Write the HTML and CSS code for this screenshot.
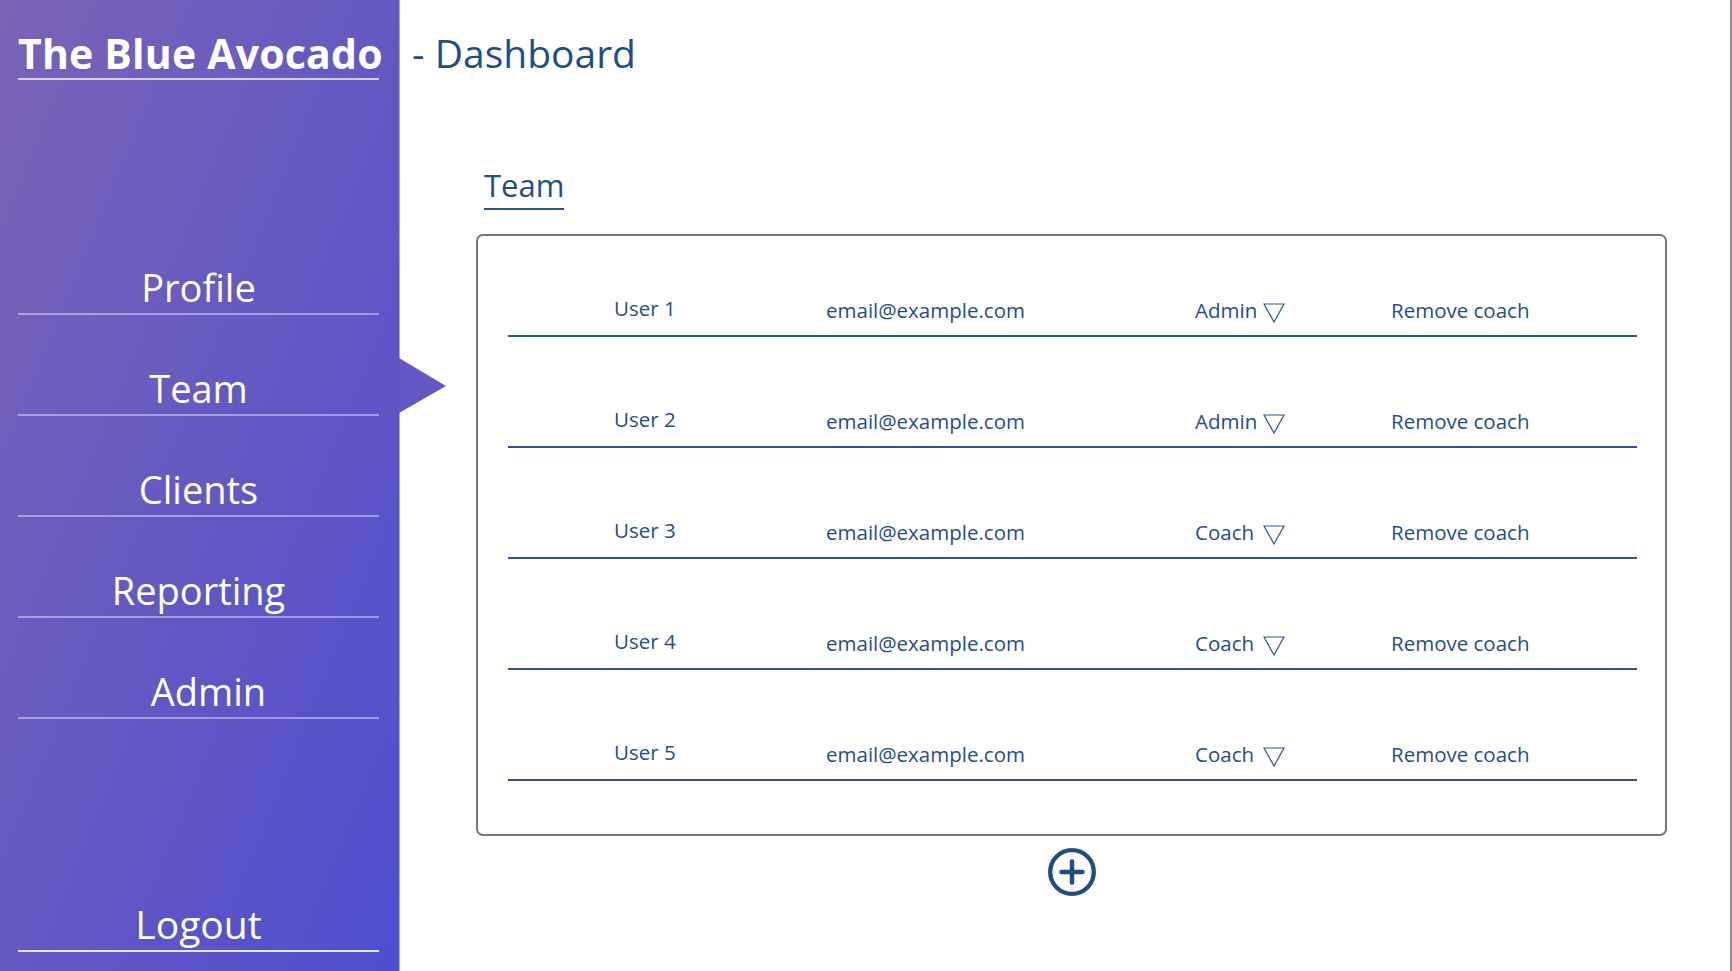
FILE: index.html
```html
<!DOCTYPE html>
<html lang="en">
<head>
<meta charset="utf-8">
<title>The Blue Avocado - Dashboard</title>
<link rel="stylesheet" href="styles.css">
</head>
<body>
<div class="app">
  <aside class="sidebar">
    <h1 class="brand">The Blue Avocado</h1>
    <nav class="nav">
      <a class="nav-item">Profile</a>
      <a class="nav-item active">Team</a>
      <a class="nav-item">Clients</a>
      <a class="nav-item">Reporting</a>
      <a class="nav-item admin">Admin</a>
    </nav>
    <a class="nav-item logout">Logout</a>
  </aside>
  <main class="main">
    <div class="page-title">- Dashboard</div>
    <h2 class="section-title">Team</h2>
    <div class="team-box">
      <div class="row">
        <span class="cell user">User 1</span>
        <span class="cell email">email@example.com</span>
        <span class="cell role"><span class="role-name">Admin</span><svg class="caret" viewBox="0 0 22 20" width="22" height="20"><polygon points="1,1 21,1 11,19" fill="none" stroke="#2a5694" stroke-width="1.2" stroke-linejoin="miter"/></svg></span>
        <span class="cell remove">Remove coach</span>
      </div>
      <div class="row">
        <span class="cell user">User 2</span>
        <span class="cell email">email@example.com</span>
        <span class="cell role"><span class="role-name">Admin</span><svg class="caret" viewBox="0 0 22 20" width="22" height="20"><polygon points="1,1 21,1 11,19" fill="none" stroke="#2a5694" stroke-width="1.2" stroke-linejoin="miter"/></svg></span>
        <span class="cell remove">Remove coach</span>
      </div>
      <div class="row">
        <span class="cell user">User 3</span>
        <span class="cell email">email@example.com</span>
        <span class="cell role"><span class="role-name">Coach</span><svg class="caret" viewBox="0 0 22 20" width="22" height="20"><polygon points="1,1 21,1 11,19" fill="none" stroke="#2a5694" stroke-width="1.2" stroke-linejoin="miter"/></svg></span>
        <span class="cell remove">Remove coach</span>
      </div>
      <div class="row">
        <span class="cell user">User 4</span>
        <span class="cell email">email@example.com</span>
        <span class="cell role"><span class="role-name">Coach</span><svg class="caret" viewBox="0 0 22 20" width="22" height="20"><polygon points="1,1 21,1 11,19" fill="none" stroke="#2a5694" stroke-width="1.2" stroke-linejoin="miter"/></svg></span>
        <span class="cell remove">Remove coach</span>
      </div>
      <div class="row">
        <span class="cell user">User 5</span>
        <span class="cell email">email@example.com</span>
        <span class="cell role"><span class="role-name">Coach</span><svg class="caret" viewBox="0 0 22 20" width="22" height="20"><polygon points="1,1 21,1 11,19" fill="none" stroke="#2a5694" stroke-width="1.2" stroke-linejoin="miter"/></svg></span>
        <span class="cell remove">Remove coach</span>
      </div>
    </div>
    <div class="add-wrap">
      <svg class="add-btn" viewBox="0 0 48 48" width="48" height="48">
        <circle cx="24" cy="24" r="21.8" fill="none" stroke="#1f4b86" stroke-width="4.3"/>
        <path d="M24 13.5 V34.5 M13.5 24 H34.5" stroke="#1f4b86" stroke-width="4.5" stroke-linecap="round" fill="none"/>
      </svg>
    </div>
  </main>
</div>
</body>
</html>
```
FILE: styles.css
```css
* { box-sizing: border-box; }

html, body {
  margin: 0;
  padding: 0;
  height: 100%;
  background: #ffffff;
}

body {
  font-family: "Open Sans", "Noto Sans", "Liberation Sans", sans-serif;
  overflow: hidden;
}

.app {
  display: flex;
  width: 1732px;
  height: 971px;
}

/* Sidebar */
.sidebar {
  position: relative;
  width: 400px;
  flex: 0 0 400px;
  height: 100%;
  display: flex;
  flex-direction: column;
  padding: 0 20px 19px 18px;
  background: linear-gradient(to bottom right, #7b63b6 0%, #6459c2 50%, #4e4ed0 100%);
  border-right: 1px solid #a9a6e6;
  color: #ffffff;
}

.brand {
  margin: 0;
  padding: 33px 0 5px 0;
  font-size: 41px;
  line-height: 40px;
  font-weight: 700;
  text-align: center;
  white-space: nowrap;
  letter-spacing: 0.2px;
  border-bottom: 2px solid rgba(255, 255, 255, 0.7);
}

.nav {
  display: flex;
  flex-direction: column;
  margin-top: 134px;
}

.nav-item {
  display: flex;
  align-items: flex-end;
  justify-content: center;
  height: 101px;
  padding-bottom: 7px;
  font-size: 38px;
  line-height: 38px;
  color: #ffffff;
  border-bottom: 2px solid rgba(255, 255, 255, 0.42);
  cursor: pointer;
}

.nav-item.admin { padding-left: 20px; }

.nav-item.active::after {
  content: "";
  position: absolute;
  left: 399px;
  top: 358px;
  width: 0;
  height: 0;
  border-top: 28px solid transparent;
  border-bottom: 27px solid transparent;
  border-left: 47px solid #6158c4;
}

.nav-item.logout {
  margin-top: auto;
  font-size: 39px;
  border-bottom-color: rgba(255, 255, 255, 0.85);
}

/* Main */
.main {
  flex: 1 1 auto;
  height: 100%;
  border-right: 2px solid #8c8c8c;
  padding: 33px 0 0 12px;
  color: #1f4e8c;
}

.page-title {
  font-size: 39px;
  line-height: 39px;
  color: #1f4e8c;
}

.section-title {
  display: inline-block;
  margin: 98px 0 0 72px;
  padding-bottom: 7px;
  font-size: 31px;
  line-height: 31px;
  font-weight: 400;
  color: #1f4e8c;
  border-bottom: 2px solid #2a5694;
}

.team-box {
  margin: 24px 0 0 64px;
  width: 1191px;
  height: 602px;
  border: 2px solid #777777;
  border-radius: 7px;
  padding: 39px 28px 0 30px;
  display: flex;
  flex-direction: column;
  gap: 49px;
}

.row {
  display: grid;
  grid-template-columns: 212px 369px 196px 1fr;
  align-items: end;
  height: 62px;
  padding: 0 0 15px 106px;
  border-bottom: 2px solid #2a5694;
  font-size: 20.5px;
  line-height: 20.5px;
  color: #1f4e8c;
}

.cell { white-space: nowrap; }

.user { margin-bottom: 2px; }

.role {
  display: flex;
  align-items: flex-start;
}

.role-name {
  display: inline-block;
  width: 68px;
}

.caret {
  display: block;
  margin-top: 3px;
  margin-bottom: -9px;
}

.add-wrap {
  display: flex;
  justify-content: center;
  width: 1191px;
  margin: 12px 0 0 64px;
}

.add-btn { display: block; }
```
